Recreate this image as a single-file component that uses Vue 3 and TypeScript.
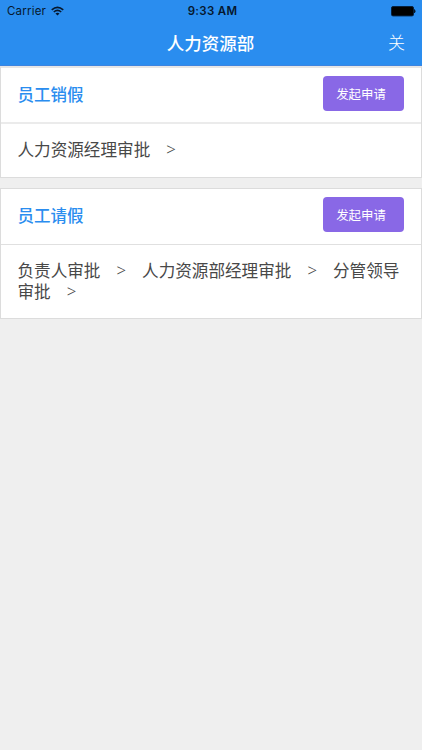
<script setup lang="ts">
interface Flow {
  title: string
  steps: string[]
}

const flows: Flow[] = [
  { title: '员工销假', steps: ['人力资源经理审批'] },
  { title: '员工请假', steps: ['负责人审批', '人力资源部经理审批', '分管领导审批'] },
]
</script>

<template>
  <div class="screen">
    <header class="header">
      <div class="status">
        <div class="carrier">
          <span>Carrier</span>
          <svg class="wifi" viewBox="0 0 14 10" width="13" height="10">
            <path d="M0.8 3.7 Q7 -1.7 13.2 3.7" fill="none" stroke="#06182e" stroke-width="1.8" />
            <path d="M3 6.1 Q7 2.7 11 6.1" fill="none" stroke="#06182e" stroke-width="1.7" />
            <path d="M4.8 7.7 Q7 5.9 9.2 7.7 L7 9.9 Z" fill="#06182e" />
          </svg>
        </div>
        <span class="time">9:33 AM</span>
        <div class="battery">
          <svg viewBox="0 0 26 11" width="26" height="11">
            <rect x="1.5" y="0.5" width="22" height="9.4" rx="1.5" fill="#000" stroke="#06213f" />
            <path d="M24.5 3.5 Q26 5.2 24.5 6.9 Z" fill="#000" stroke="#000" stroke-width="0.6" />
          </svg>
        </div>
      </div>
      <div class="nav">
        <span></span>
        <h1>人力资源部</h1>
        <span class="close">关</span>
      </div>
    </header>
    <main class="list">
      <section v-for="flow in flows" :key="flow.title" class="card">
        <div class="head">
          <h2>{{ flow.title }}</h2>
          <button type="button" class="apply">发起申请</button>
        </div>
        <p class="steps">
          <template v-for="step in flow.steps" :key="step">{{ step }}<span class="arrow">&gt;</span></template>
        </p>
      </section>
    </main>
  </div>
</template>

<style>
body {
  background: #efefef;
}
</style>

<style scoped>
.screen {
  min-height: 750px;
  background: #efefef;
  font-family: "Noto Sans CJK SC", sans-serif;
  color: #484848;
}
.header {
  box-sizing: border-box;
  height: 66px;
  background: #2a8def;
  border-bottom: 1px solid #3c84e0;
}
.status {
  display: grid;
  grid-template-columns: 1fr auto 1fr;
  align-items: center;
  height: 22px;
  padding: 0 6px 0 7px;
  font-family: Inter, sans-serif;
  font-size: 11.5px;
  color: #06182e;
}
.carrier {
  display: flex;
  align-items: center;
  gap: 5px;
  letter-spacing: 0.2px;
}
.wifi {
  margin-top: -1px;
}
.time {
  padding-left: 2px;
  font-weight: 600;
  letter-spacing: 0.3px;
}
.battery {
  display: flex;
  justify-content: flex-end;
}
.nav {
  display: grid;
  grid-template-columns: 1fr auto 1fr;
  align-items: center;
  height: 41px;
  padding: 0 17px 0 16px;
  color: #fff;
}
h1 {
  margin: 0;
  font-size: 17.5px;
  line-height: 24px;
  font-weight: 500;
}
.close {
  justify-self: end;
  margin-top: -1px;
  font-size: 17px;
  line-height: 24px;
  font-weight: 300;
}
.list {
  display: flex;
  flex-direction: column;
  gap: 10px;
}
.card {
  border: 1px solid #dcdcdc;
  background: #fff;
}
.card:first-child {
  border-top: 2px solid #e6e6e6;
}
.head {
  box-sizing: border-box;
  display: flex;
  align-items: flex-start;
  justify-content: space-between;
  height: 56px;
  padding: 8px 17px 0 16.5px;
  border-bottom: 1px solid #e0e0e0;
}
.card:first-child .head {
  border-bottom: 2px solid #ebebeb;
}
h2 {
  margin: 6px 0 0;
  font-size: 16.5px;
  line-height: 24px;
  font-weight: 500;
  color: #2a8def;
}
.apply {
  width: 81px;
  height: 35px;
  padding: 0 5px 0 0;
  border: 0;
  border-radius: 4px;
  background: #8968e6;
  color: #fff;
  font-family: inherit;
  font-size: 12.4px;
}
.steps {
  margin: 0;
  padding: 15px 16px 17px 16.5px;
  font-size: 16.6px;
  line-height: 20.5px;
}
.card:first-child .steps {
  padding: 14.5px 16px 18px 16.5px;
}
.arrow {
  margin: 0 16px;
  font-family: "Liberation Serif", serif;
  font-size: 17px;
  line-height: 1;
  vertical-align: 1px;
}
</style>
